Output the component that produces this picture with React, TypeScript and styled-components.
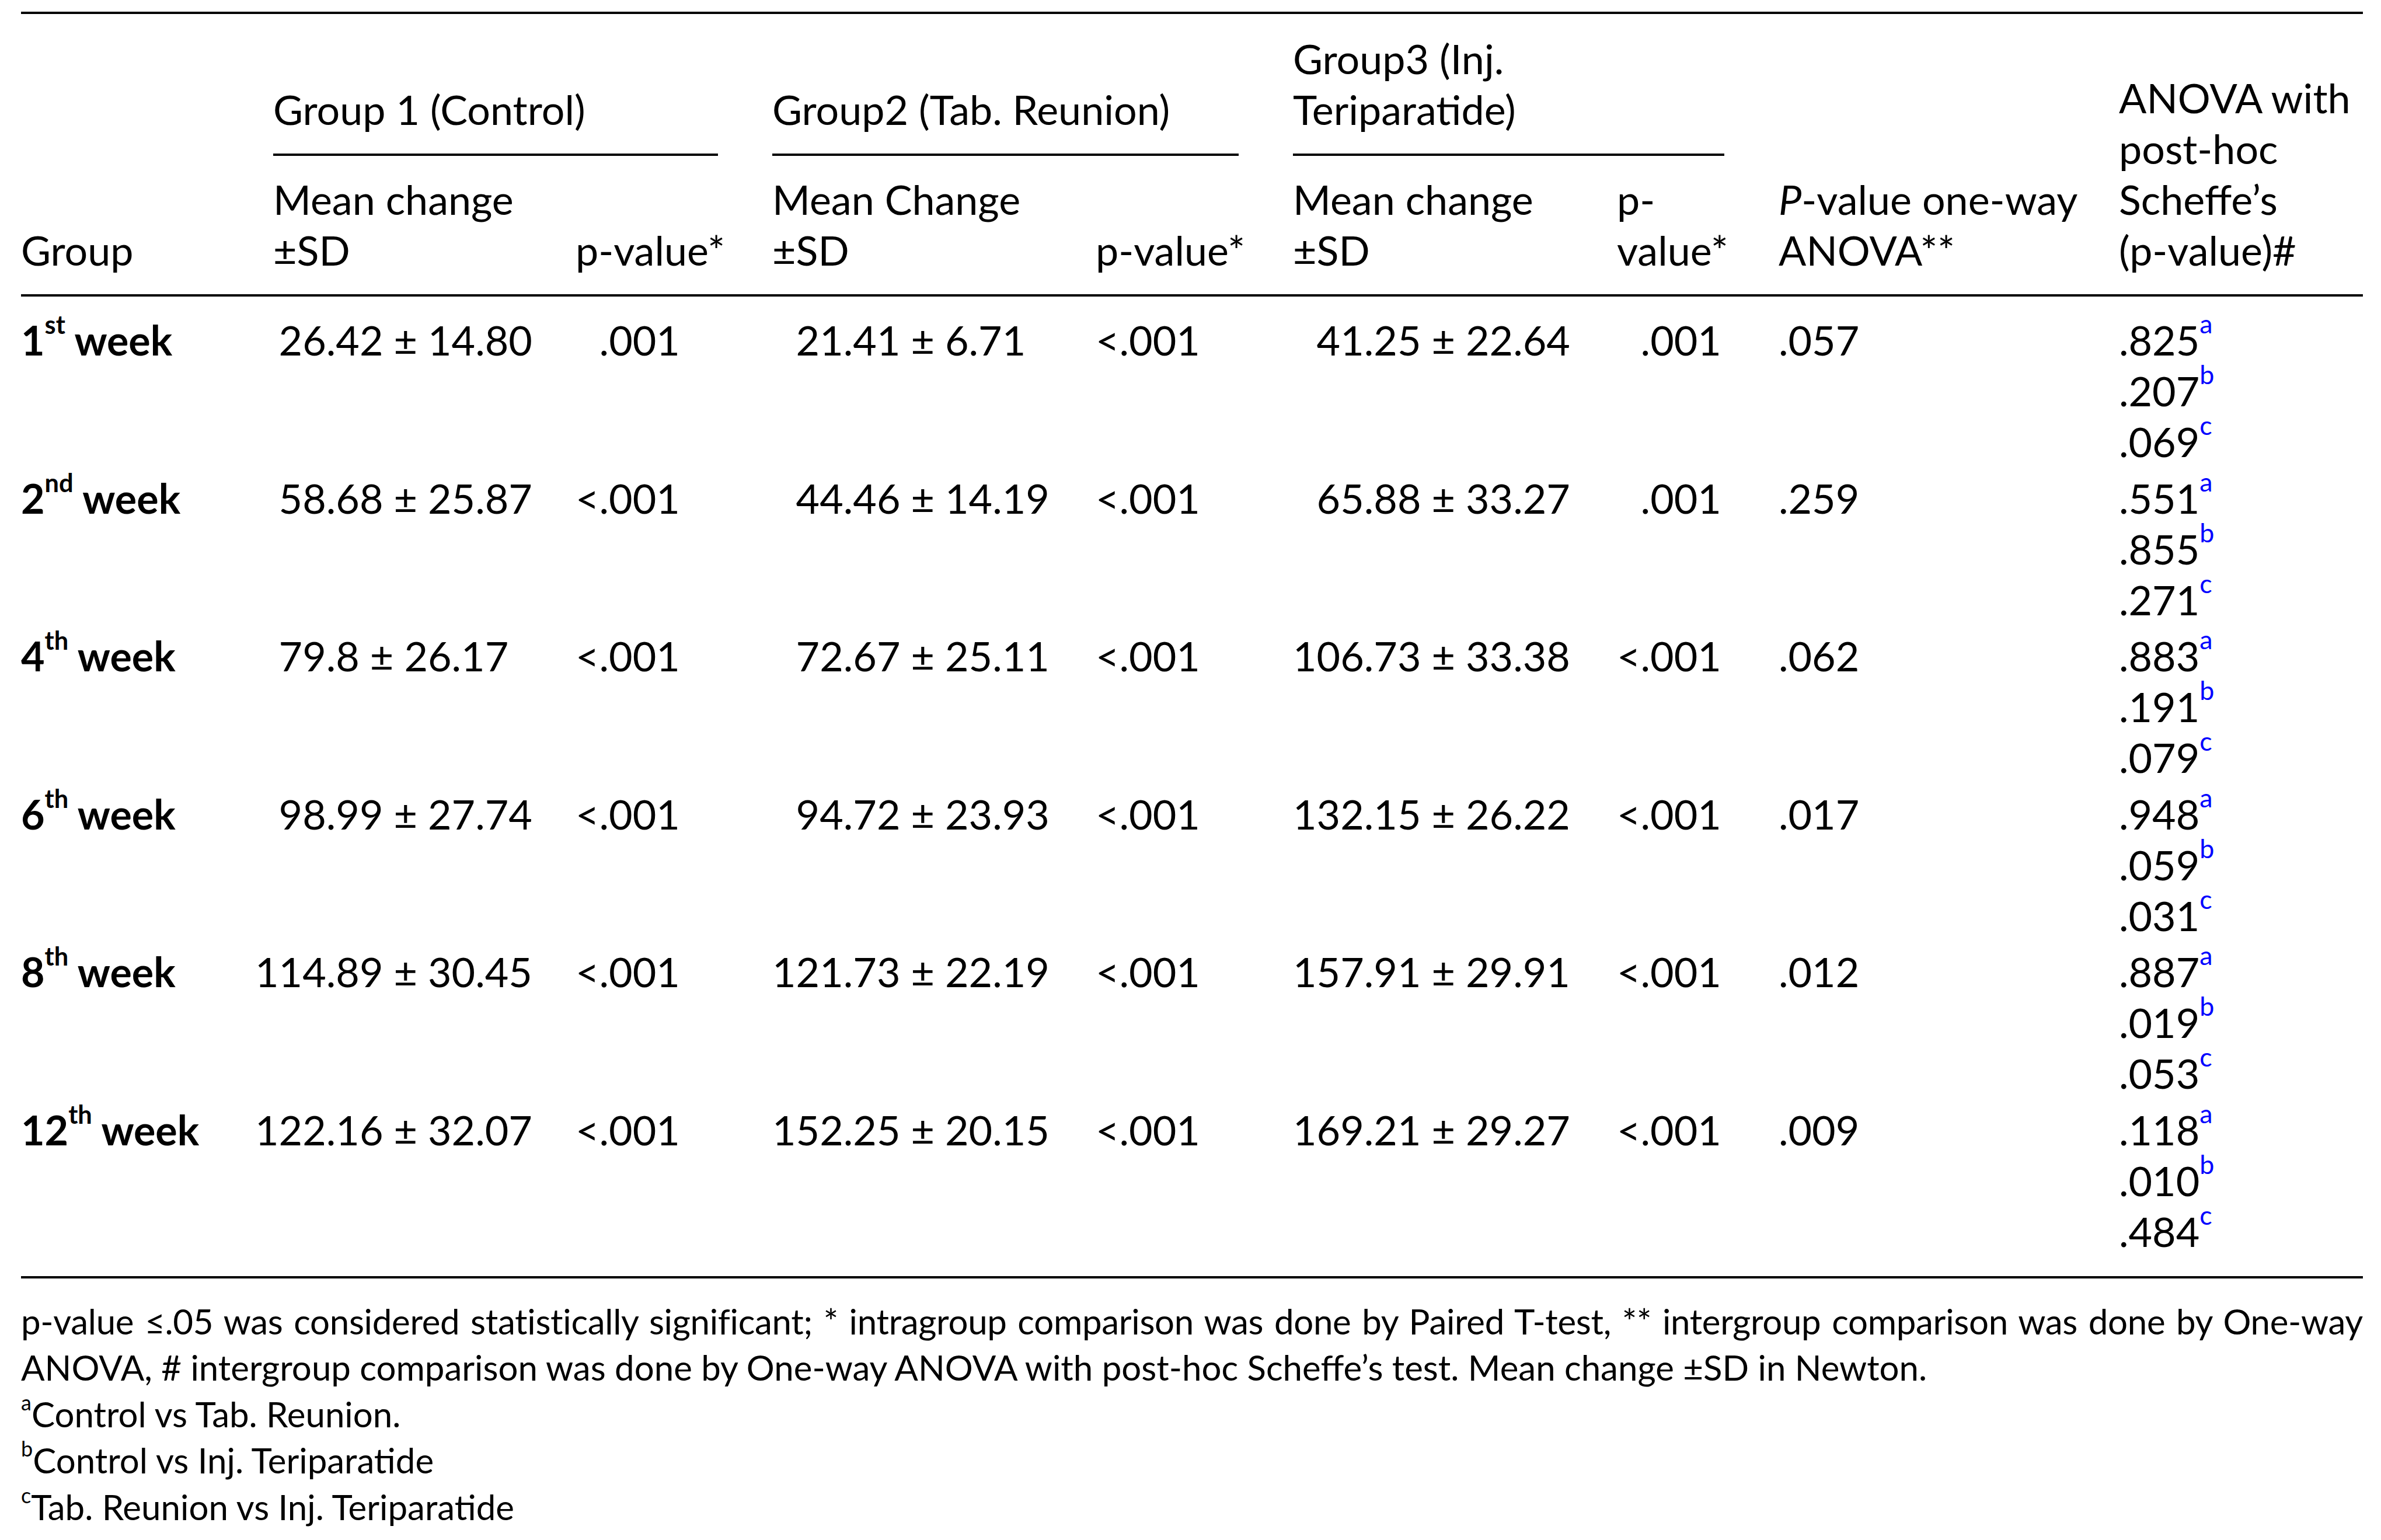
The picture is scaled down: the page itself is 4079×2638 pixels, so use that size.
import React from 'react';
import styled, { createGlobalStyle } from 'styled-components';

const GlobalStyle = createGlobalStyle`
  html, body {
    margin: 0;
    padding: 0;
    background: #fff;
  }
  body {
    font-family: Lato, "Open Sans", "Liberation Sans", sans-serif;
    color: #000;
  }
`;

// column tracks of the table, left to right
const COLS = '339px 425px 244px 461px 245px 462px 184px 490px 419px';
const GAP = 93;

type Row = {
  week: string;
  ord: string;
  g1: [string, string];
  p1: string;
  g2: [string, string];
  p2: string;
  g3: [string, string];
  p3: string;
  anova: string;
  scheffe: [string, string, string];
};

const rows: Row[] = [
  { week: '1', ord: 'st', g1: ['26.42', '14.80'], p1: '.001', g2: ['21.41', '6.71'], p2: '<.001', g3: ['41.25', '22.64'], p3: '.001', anova: '.057', scheffe: ['.825', '.207', '.069'] },
  { week: '2', ord: 'nd', g1: ['58.68', '25.87'], p1: '<.001', g2: ['44.46', '14.19'], p2: '<.001', g3: ['65.88', '33.27'], p3: '.001', anova: '.259', scheffe: ['.551', '.855', '.271'] },
  { week: '4', ord: 'th', g1: ['79.8', '26.17'], p1: '<.001', g2: ['72.67', '25.11'], p2: '<.001', g3: ['106.73', '33.38'], p3: '<.001', anova: '.062', scheffe: ['.883', '.191', '.079'] },
  { week: '6', ord: 'th', g1: ['98.99', '27.74'], p1: '<.001', g2: ['94.72', '23.93'], p2: '<.001', g3: ['132.15', '26.22'], p3: '<.001', anova: '.017', scheffe: ['.948', '.059', '.031'] },
  { week: '8', ord: 'th', g1: ['114.89', '30.45'], p1: '<.001', g2: ['121.73', '22.19'], p2: '<.001', g3: ['157.91', '29.91'], p3: '<.001', anova: '.012', scheffe: ['.887', '.019', '.053'] },
  { week: '12', ord: 'th', g1: ['122.16', '32.07'], p1: '<.001', g2: ['152.25', '20.15'], p2: '<.001', g3: ['169.21', '29.27'], p3: '<.001', anova: '.009', scheffe: ['.118', '.010', '.484'] },
];

const Page = styled.div`
  width: 4079px;
  box-sizing: border-box;
  padding: 20px 31px 0 36px;
  font-size: 70px;
  line-height: 87px;
  font-variant-numeric: tabular-nums;
`;

const Rule = styled.div`
  height: 4px;
  background: #000;
`;

const HeadGrid = styled.div`
  display: grid;
  grid-template-columns: ${COLS};
  grid-template-rows: auto 4px auto;
  column-gap: ${GAP}px;
  padding-top: 33px;
`;

const HeadCell = styled.div<{ $col: string; $row: string; $top?: number }>`
  grid-column: ${(p) => p.$col};
  grid-row: ${(p) => p.$row};
  align-self: end;
  padding-top: ${(p) => p.$top ?? 0}px;
  padding-bottom: 32px;
  white-space: nowrap;
`;

const GroupRule = styled.div<{ $col: string }>`
  grid-column: ${(p) => p.$col};
  grid-row: 2;
  background: #000;
`;

const Body = styled.div`
  padding: 31px 0 23px;
`;

const BodyRow = styled.div`
  display: grid;
  grid-template-columns: ${COLS};
  column-gap: ${GAP}px;
  padding-bottom: 9.6px;
`;

const WeekLabel = styled.div`
  font-weight: 700;
  white-space: nowrap;
`;

const Sup = styled.sup<{ $blue?: boolean }>`
  font-size: ${(p) => (p.$blue ? 0.64 : 0.62)}em;
  line-height: 0;
  vertical-align: 0.85em;
  color: ${(p) => (p.$blue ? '#0000ff' : 'inherit')};
`;

const Mean = styled.div<{ $pull?: boolean }>`
  white-space: nowrap;
  margin-left: ${(p) => (p.$pull ? -31 : 0)}px;
`;

const Ghost = styled.span`
  visibility: hidden;
`;

const PValue = styled.div`
  white-space: nowrap;
`;

const Stack = styled.div`
  display: flex;
  flex-direction: column;
`;

const Notes = styled.div`
  padding-top: 34px;
  font-size: 60px;
  line-height: 79.5px;
`;

const Justified = styled.div`
  text-align: justify;
  text-align-last: justify;
  letter-spacing: -0.3px;
`;

const NoteLine = styled.div`
  white-space: nowrap;
`;

const NoteSup = styled.sup`
  font-size: 0.6em;
  line-height: 0;
  vertical-align: 0.8em;
`;

function MeanValue({ value, pull }: { value: [string, string]; pull?: boolean }) {
  const intLen = value[0].split('.')[0].length;
  const pad = '0'.repeat(Math.max(0, 3 - intLen));
  return (
    <Mean $pull={pull}>
      {pad && <Ghost>{pad}</Ghost>}
      {value[0]} ± {value[1]}
    </Mean>
  );
}

function P({ value }: { value: string }) {
  return (
    <PValue>
      {!value.startsWith('<') && <Ghost>&lt;</Ghost>}
      {value}
    </PValue>
  );
}

export default function App() {
  return (
    <>
      <GlobalStyle />
      <Page>
        <Rule />
        <HeadGrid>
          <HeadCell $col="1" $row="1 / 4">Group</HeadCell>
          <HeadCell $col="2 / 4" $row="1">Group 1 (Control)</HeadCell>
          <HeadCell $col="4 / 6" $row="1">Group2 (Tab. Reunion)</HeadCell>
          <HeadCell $col="6 / 8" $row="1">
            Group3 (Inj.
            <br />
            Teriparatide)
          </HeadCell>
          <GroupRule $col="2 / 4" />
          <GroupRule $col="4 / 6" />
          <GroupRule $col="6 / 8" />
          <HeadCell $col="2" $row="3" $top={31}>
            Mean change
            <br />
            ±SD
          </HeadCell>
          <HeadCell $col="3" $row="3" $top={31}>p-value*</HeadCell>
          <HeadCell $col="4" $row="3" $top={31}>
            Mean Change
            <br />
            ±SD
          </HeadCell>
          <HeadCell $col="5" $row="3" $top={31}>p-value*</HeadCell>
          <HeadCell $col="6" $row="3" $top={31}>
            Mean change
            <br />
            ±SD
          </HeadCell>
          <HeadCell $col="7" $row="3" $top={31}>
            p-
            <br />
            value*
          </HeadCell>
          <HeadCell $col="8" $row="1 / 4">
            <i>P</i>-value one-way
            <br />
            ANOVA**
          </HeadCell>
          <HeadCell $col="9" $row="1 / 4">
            ANOVA with
            <br />
            post-hoc
            <br />
            Scheffe’s
            <br />
            (p-value)#
          </HeadCell>
        </HeadGrid>
        <Rule />
        <Body>
          {rows.map((r) => (
            <BodyRow key={r.week}>
              <WeekLabel>
                {r.week}
                <Sup>{r.ord}</Sup> week
              </WeekLabel>
              <MeanValue value={r.g1} pull />
              <P value={r.p1} />
              <MeanValue value={r.g2} />
              <P value={r.p2} />
              <MeanValue value={r.g3} />
              <P value={r.p3} />
              <PValue>{r.anova}</PValue>
              <Stack>
                {r.scheffe.map((v, i) => (
                  <PValue key={i}>
                    {v}
                    <Sup $blue>{'abc'[i]}</Sup>
                  </PValue>
                ))}
              </Stack>
            </BodyRow>
          ))}
        </Body>
        <Rule />
        <Notes>
          <Justified>
            p-value ≤.05 was considered statistically significant; * intragroup comparison was done by Paired
            T-test, ** intergroup comparison was done by One-way
          </Justified>
          <NoteLine>
            ANOVA, # intergroup comparison was done by One-way ANOVA with post-hoc Scheffe’s test. Mean change ±SD
            in Newton.
          </NoteLine>
          <NoteLine>
            <NoteSup>a</NoteSup>Control vs Tab. Reunion.
          </NoteLine>
          <NoteLine>
            <NoteSup>b</NoteSup>Control vs Inj. Teriparatide
          </NoteLine>
          <NoteLine>
            <NoteSup>c</NoteSup>Tab. Reunion vs Inj. Teriparatide
          </NoteLine>
        </Notes>
      </Page>
    </>
  );
}
